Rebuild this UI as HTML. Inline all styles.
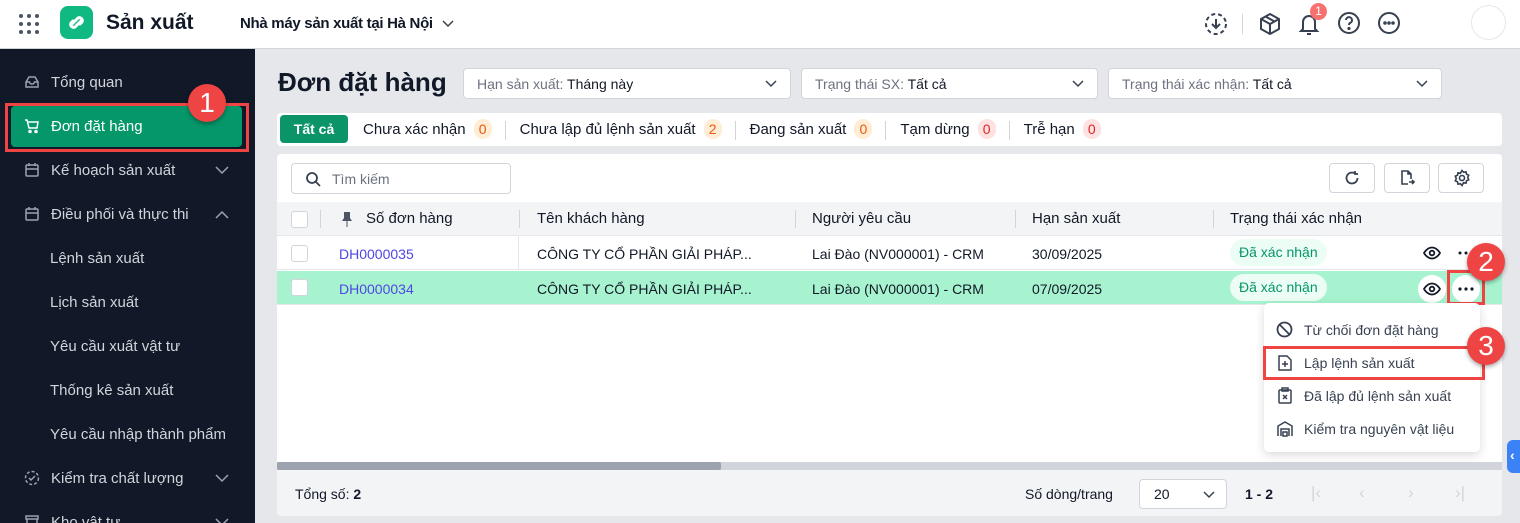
<!DOCTYPE html>
<html><head><meta charset="utf-8"><style>
*{box-sizing:border-box;margin:0;padding:0}
body{width:1520px;height:523px;overflow:hidden;font-family:"Liberation Sans",sans-serif;background:#e5e7eb;position:relative;color:#111827;font-size:14px}
.a{position:absolute}
.hdr{left:0;top:0;width:1520px;height:49px;background:#fff;border-bottom:1px solid #d1d5db}
.side{left:0;top:49px;width:255px;height:474px;background:#111827;color:#d1d5db;font-size:15px;overflow:hidden}
.side .it{position:absolute;left:50px}
.side svg{position:absolute}
.sel{background:#fff;border:1px solid #d1d5db;border-radius:4px;height:31px;font-size:14px;color:#6b7280;padding:7px 13px}
.sel b{font-weight:normal;color:#111827}
.chev{position:absolute;right:12px;top:8px}
.badge{display:inline-block;min-width:18px;height:20px;border-radius:9px;text-align:center;font-size:14px;line-height:20px;margin-left:8px}
.o{background:#ffedd5;color:#ea580c}.r{background:#fee2e2;color:#dc2626}
.sep{display:inline-block;width:1px;height:19px;background:#d1d5db;margin:0 14px 0 13px;vertical-align:middle}
.num{width:38px;height:38px;border-radius:50%;background:#ef4444;color:#fff;font-size:28px;text-align:center;line-height:38px;box-shadow:0 2px 4px rgba(0,0,0,.35)}
.cb{width:17px;height:17px;border:1px solid #d1d5db;border-radius:3px;background:#fff}
.th{font-size:15px;color:#111827}
.td{font-size:14px;color:#111827}
.pill{background:#ecfdf5;color:#059669;border-radius:14px;height:27px;padding:5px 9px;font-size:14px}
.btn{background:#fff;border:1px solid #d1d5db;border-radius:4px;width:46px;height:30px}
.mi{left:1278px;font-size:14px;color:#374151}
</style></head><body>
<div class="a hdr">
 <svg class="a" style="left:19px;top:14px" width="20" height="20" viewBox="0 0 20 20" fill="#4b5563"><circle cx="2" cy="2" r="2"/><circle cx="10" cy="2" r="2"/><circle cx="18" cy="2" r="2"/><circle cx="2" cy="10" r="2"/><circle cx="10" cy="10" r="2"/><circle cx="18" cy="10" r="2"/><circle cx="2" cy="18" r="2"/><circle cx="10" cy="18" r="2"/><circle cx="18" cy="18" r="2"/></svg>
 <div class="a" style="left:60px;top:6px;width:33px;height:33px;border-radius:8px;background:#10b981"><svg width="33" height="33" viewBox="0 0 33 33"><path d="M11 19l7-7a3 3 0 0 1 4 4l-2 2M22 14l-7 7a3 3 0 0 1-4-4l2-2" stroke="#fff" stroke-width="3" fill="none" stroke-linecap="round"/></svg></div>
 <div class="a" style="left:106px;top:11px;font-size:21px;font-weight:bold;color:#111827">Sản xuất</div>
 <div class="a" style="left:240px;top:15px;font-size:15px;font-weight:bold;color:#111827;letter-spacing:-0.3px">Nhà máy sản xuất tại Hà Nội</div>
 <svg class="a" style="left:442px;top:18px" width="12" height="10" viewBox="0 0 12 10"><path d="M1 3l5 5 5-5" stroke="#374151" stroke-width="1.5" fill="none"/></svg>
 <svg class="a" style="left:1204px;top:12px" width="24" height="24" viewBox="0 0 24 24" fill="none" stroke="#374151" stroke-width="2"><circle cx="12" cy="12" r="10" stroke-dasharray="4 3"/><path d="M12 7v9M8 12l4 4 4-4"/></svg>
 <div class="a" style="left:1242px;top:14px;width:1px;height:20px;background:#d1d5db"></div>
 <svg class="a" style="left:1258px;top:12px" width="24" height="24" viewBox="0 0 24 24" fill="none" stroke="#374151" stroke-width="2" stroke-linejoin="round"><path d="M12 2l9 5v10l-9 5-9-5V7zM3 7l9 5 9-5M12 12v10M7.5 4.5l9 5"/></svg>
 <svg class="a" style="left:1297px;top:11px" width="24" height="26" viewBox="0 0 24 26" fill="none" stroke="#374151" stroke-width="2"><path d="M6 18V11a6 6 0 0 1 12 0v7l2 2H4zM10 23h4"/></svg>
 <div class="a" style="left:1310px;top:3px;width:17px;height:17px;border-radius:50%;background:#f87171;color:#fff;font-size:12px;text-align:center;line-height:17px">1</div>
 <svg class="a" style="left:1337px;top:11px" width="24" height="24" viewBox="0 0 24 24" fill="none" stroke="#374151" stroke-width="2"><circle cx="12" cy="12" r="10"/><path d="M9 9a3 3 0 1 1 4 3c-1 .5-1 1-1 2"/><circle cx="12" cy="17.5" r=".6" fill="#374151"/></svg>
 <svg class="a" style="left:1377px;top:11px" width="24" height="24" viewBox="0 0 24 24" fill="none" stroke="#374151" stroke-width="2"><circle cx="12" cy="12" r="10"/><circle cx="8" cy="12" r=".8" fill="#374151"/><circle cx="12" cy="12" r=".8" fill="#374151"/><circle cx="16" cy="12" r=".8" fill="#374151"/></svg>
 <div class="a" style="left:1471px;top:5px;width:35px;height:35px;border-radius:50%;border:1px solid #e5e7eb"></div>
</div>

<div class="a side">
 <svg style="left:24px;top:25px" width="16" height="16" viewBox="0 0 16 16" fill="none" stroke="#9ca3af" stroke-width="1.5"><path d="M2 8l3-5h6l3 5v5H2zM2 8h3.5a2.5 2 0 0 0 5 0H14"/></svg>
 <div class="it" style="top:25px;left:51px">Tổng quan</div>
 <div class="a" style="left:11px;top:57px;width:231px;height:41px;background:#059669;border-radius:4px"></div>
 <svg style="left:24px;top:69px" width="16" height="16" viewBox="0 0 16 16" fill="none" stroke="#fff" stroke-width="1.5"><path d="M1 2h2l2 8h8l1-6H4"/><circle cx="6" cy="13.5" r="1"/><circle cx="12" cy="13.5" r="1"/></svg>
 <div class="it" style="top:69px;left:51px;color:#fff">Đơn đặt hàng</div>
 <div class="a" style="left:5px;top:54px;width:244px;height:49px;border:3px solid #ef4444"></div>
 <svg style="left:24px;top:113px" width="16" height="16" viewBox="0 0 16 16" fill="none" stroke="#9ca3af" stroke-width="1.5"><rect x="2" y="3" width="12" height="11" rx="1"/><path d="M2 7h12M5 1v3M11 1v3"/></svg>
 <div class="it" style="top:113px;left:51px">Kế hoạch sản xuất</div>
 <svg style="left:215px;top:117px" width="14" height="9" viewBox="0 0 14 9"><path d="M1 1l6 6 6-6" stroke="#9ca3af" stroke-width="1.5" fill="none"/></svg>
 <svg style="left:24px;top:157px" width="16" height="16" viewBox="0 0 16 16" fill="none" stroke="#9ca3af" stroke-width="1.5"><rect x="2" y="3" width="12" height="11" rx="1"/><path d="M2 7h12M5 1v3M11 1v3"/></svg>
 <div class="it" style="top:157px;left:51px">Điều phối và thực thi</div>
 <svg style="left:215px;top:161px" width="14" height="9" viewBox="0 0 14 9"><path d="M1 8l6-6 6 6" stroke="#9ca3af" stroke-width="1.5" fill="none"/></svg>
 <div class="it" style="top:201px">Lệnh sản xuất</div>
 <div class="it" style="top:245px">Lịch sản xuất</div>
 <div class="it" style="top:289px">Yêu cầu xuất vật tư</div>
 <div class="it" style="top:333px">Thống kê sản xuất</div>
 <div class="it" style="top:377px">Yêu cầu nhập thành phẩm</div>
 <svg style="left:24px;top:421px" width="16" height="16" viewBox="0 0 16 16" fill="none" stroke="#9ca3af" stroke-width="1.5"><circle cx="8" cy="8" r="6.5" stroke-dasharray="3 2"/><path d="M5 8l2 2 4-4"/></svg>
 <div class="it" style="top:421px;left:51px">Kiểm tra chất lượng</div>
 <svg style="left:215px;top:425px" width="14" height="9" viewBox="0 0 14 9"><path d="M1 1l6 6 6-6" stroke="#9ca3af" stroke-width="1.5" fill="none"/></svg>
 <div class="it" style="top:465px;left:51px">Kho vật tư</div>
 <svg style="left:24px;top:465px" width="16" height="16" viewBox="0 0 16 16" fill="none" stroke="#9ca3af" stroke-width="1.5"><path d="M2 2h12v3H2zM3 5v9h10V5"/></svg>
 <svg style="left:215px;top:469px" width="14" height="9" viewBox="0 0 14 9"><path d="M1 1l6 6 6-6" stroke="#9ca3af" stroke-width="1.5" fill="none"/></svg>
</div>
<div class="a num" style="left:188px;top:84px">1</div>

<div class="a" style="left:278px;top:67px;font-size:26px;font-weight:bold;color:#111827">Đơn đặt hàng</div>
<div class="a sel" style="left:463px;top:68px;width:328px">Hạn sản xuất: <b>Tháng này</b><svg class="chev" width="14" height="14" viewBox="0 0 14 14"><path d="M2 4l5 5 5-5" stroke="#374151" stroke-width="1.5" fill="none"/></svg></div>
<div class="a sel" style="left:801px;top:68px;width:297px">Trạng thái SX: <b>Tất cả</b><svg class="chev" width="14" height="14" viewBox="0 0 14 14"><path d="M2 4l5 5 5-5" stroke="#374151" stroke-width="1.5" fill="none"/></svg></div>
<div class="a sel" style="left:1108px;top:68px;width:334px">Trạng thái xác nhận: <b>Tất cả</b><svg class="chev" width="14" height="14" viewBox="0 0 14 14"><path d="M2 4l5 5 5-5" stroke="#374151" stroke-width="1.5" fill="none"/></svg></div>

<div class="a" style="left:277px;top:113px;width:1225px;height:33px;background:#fff;border-radius:4px"></div>
<div class="a" style="left:280px;top:115px;width:68px;height:28px;background:#0a9467;border-radius:4px;color:#fff;font-weight:bold;font-size:14px;text-align:center;line-height:28px">Tất cả</div>
<div class="a" style="left:363px;top:119px;font-size:15px;color:#111827;white-space:nowrap">Chưa xác nhận<span class="badge o">0</span><span class="sep"></span>Chưa lập đủ lệnh sản xuất<span class="badge o">2</span><span class="sep"></span>Đang sản xuất<span class="badge o">0</span><span class="sep"></span>Tạm dừng<span class="badge r">0</span><span class="sep"></span>Trễ hạn<span class="badge r">0</span></div>

<div class="a" style="left:277px;top:154px;width:1225px;height:362px;background:#fff;border-radius:4px;overflow:hidden">
 <div class="a" style="left:14px;top:9px;width:220px;height:31px;border:1px solid #d1d5db;border-radius:4px"></div>
 <svg class="a" style="left:28px;top:17px" width="16" height="16" viewBox="0 0 16 16" fill="none" stroke="#374151" stroke-width="1.8"><circle cx="7" cy="7" r="5"/><path d="M11 11l4 4"/></svg>
 <div class="a" style="left:55px;top:17px;color:#6b7280;font-size:14px">Tìm kiếm</div>
 <div class="a btn" style="left:1052px;top:9px"><svg style="margin:6px 14px" width="16" height="16" viewBox="0 0 16 16" fill="none" stroke="#374151" stroke-width="1.8"><path d="M13.5 8A5.5 5.5 0 1 1 11 3.4M11 1v3h3"/></svg></div>
 <div class="a btn" style="left:1107px;top:9px"><svg style="margin:6px 14px" width="16" height="16" viewBox="0 0 16 16" fill="none" stroke="#374151" stroke-width="1.6"><path d="M9 14H3V1h6l3 3v5M9 1v3h3M10 12h5M13 10l2 2-2 2"/></svg></div>
 <div class="a btn" style="left:1161px;top:9px"><svg style="margin:5px 14px" width="18" height="18" viewBox="0 0 18 18" fill="none" stroke="#374151" stroke-width="1.6"><circle cx="9" cy="9" r="2.5"/><path d="M9 1.5l1.6 1.8 2.4-.5.5 2.4 2.2 1-1 2.3 1 2.3-2.2 1-.5 2.4-2.4-.5L9 16.5l-1.6-1.8-2.4.5-.5-2.4-2.2-1 1-2.3-1-2.3 2.2-1 .5-2.4 2.4.5z"/></svg></div>
 <div class="a" style="left:0;top:48px;width:1225px;height:34px;background:#f3f4f6;border-bottom:1px solid #e5e7eb"></div>
 <div class="a cb" style="left:14px;top:57px"></div>
 <div class="a" style="left:43px;top:56px;width:1px;height:18px;background:#d1d5db"></div>
 <svg class="a" style="left:64px;top:57px" width="12" height="16" viewBox="0 0 12 16" fill="#4b5563"><path d="M3 1h6v6l2 3H1l2-3zM5.5 10h1v6h-1z"/></svg>
 <div class="a th" style="left:89px;top:56px">Số đơn hàng</div>
 <div class="a" style="left:242px;top:56px;width:1px;height:18px;background:#d1d5db"></div>
 <div class="a th" style="left:260px;top:56px">Tên khách hàng</div>
 <div class="a" style="left:518px;top:56px;width:1px;height:18px;background:#d1d5db"></div>
 <div class="a th" style="left:535px;top:56px">Người yêu cầu</div>
 <div class="a" style="left:738px;top:56px;width:1px;height:18px;background:#d1d5db"></div>
 <div class="a th" style="left:755px;top:56px">Hạn sản xuất</div>
 <div class="a" style="left:936px;top:56px;width:1px;height:18px;background:#d1d5db"></div>
 <div class="a th" style="left:953px;top:56px">Trạng thái xác nhận</div>
 <div class="a" style="left:0;top:82px;width:1225px;height:34px;border-bottom:1px solid #e5e7eb"></div>
 <div class="a" style="left:241px;top:82px;width:1px;height:34px;background:#e5e7eb"></div>
 <div class="a cb" style="left:14px;top:91px"></div>
 <div class="a td" style="left:62px;top:92px;color:#4f46e5">DH0000035</div>
 <div class="a td" style="left:260px;top:92px">CÔNG TY CỔ PHẦN GIẢI PHÁP...</div>
 <div class="a td" style="left:535px;top:92px">Lai Đào (NV000001) - CRM</div>
 <div class="a td" style="left:755px;top:92px">30/09/2025</div>
 <div class="a pill" style="left:953px;top:85px">Đã xác nhận</div>
 <svg class="a" style="left:1146px;top:92px" width="18" height="14" viewBox="0 0 18 14" fill="none" stroke="#111827" stroke-width="1.8"><path d="M1 7s3-5.5 8-5.5S17 7 17 7s-3 5.5-8 5.5S1 7 1 7z"/><circle cx="9" cy="7" r="2.3"/></svg>
 <svg class="a" style="left:1181px;top:97px" width="16" height="4" viewBox="0 0 16 4" fill="#111827"><circle cx="2" cy="2" r="1.5"/><circle cx="8" cy="2" r="1.5"/><circle cx="14" cy="2" r="1.5"/></svg>
 <div class="a" style="left:0;top:117px;width:1225px;height:34px;background:#a7f3d0;border-bottom:1px solid #e5e7eb"></div>
 <div class="a cb" style="left:14px;top:125px"></div>
 <div class="a td" style="left:62px;top:127px;color:#4f46e5">DH0000034</div>
 <div class="a td" style="left:260px;top:127px">CÔNG TY CỔ PHẦN GIẢI PHÁP...</div>
 <div class="a td" style="left:535px;top:127px">Lai Đào (NV000001) - CRM</div>
 <div class="a td" style="left:755px;top:127px">07/09/2025</div>
 <div class="a pill" style="left:953px;top:120px">Đã xác nhận</div>
 <div class="a" style="left:1141px;top:121px;width:28px;height:28px;border-radius:50%;background:#fff"></div>
 <svg class="a" style="left:1146px;top:128px" width="18" height="14" viewBox="0 0 18 14" fill="none" stroke="#111827" stroke-width="1.8"><path d="M1 7s3-5.5 8-5.5S17 7 17 7s-3 5.5-8 5.5S1 7 1 7z"/><circle cx="9" cy="7" r="2.3"/></svg>
 <div class="a" style="left:1175px;top:121px;width:28px;height:28px;border-radius:50%;background:#fff"></div>
 <svg class="a" style="left:1181px;top:133px" width="16" height="4" viewBox="0 0 16 4" fill="#111827"><circle cx="2" cy="2" r="1.6"/><circle cx="8" cy="2" r="1.6"/><circle cx="14" cy="2" r="1.6"/></svg>
 <div class="a" style="left:0;top:308px;width:1225px;height:8px;background:#d1d5db"></div>
 <div class="a" style="left:0;top:308px;width:444px;height:8px;background:#9ca3af;border-radius:2px"></div>
 <div class="a" style="left:0;top:316px;width:1225px;height:46px;background:#f3f4f6"></div>
 <div class="a" style="left:18px;top:332px;font-size:14px">Tổng số: <b>2</b></div>
 <div class="a" style="left:748px;top:332px;font-size:14px">Số dòng/trang</div>
 <div class="a" style="left:862px;top:325px;width:88px;height:30px;border:1px solid #d1d5db;border-radius:4px;background:#fff;padding:6px 14px;font-size:14px">20<svg style="position:absolute;right:10px;top:9px" width="14" height="12" viewBox="0 0 14 12"><path d="M2 3l5 5 5-5" stroke="#374151" stroke-width="1.5" fill="none"/></svg></div>
 <div class="a" style="left:968px;top:332px;font-size:14px;font-weight:bold">1 - 2</div>
 <div class="a" style="left:1034px;top:329px;color:#d1d5db;font-size:17px">|‹</div>
 <div class="a" style="left:1082px;top:329px;color:#d1d5db;font-size:17px">‹</div>
 <div class="a" style="left:1131px;top:329px;color:#d1d5db;font-size:17px">›</div>
 <div class="a" style="left:1178px;top:329px;color:#d1d5db;font-size:17px">›|</div>
</div>
<div class="a" style="left:1447px;top:270px;width:38px;height:35px;border:3px solid #ef4444"></div>
<div class="a num" style="left:1467px;top:243px">2</div>

<div class="a" style="left:1264px;top:303px;width:216px;height:149px;background:#fff;border-radius:5px;box-shadow:0 3px 10px rgba(0,0,0,.15)"></div>
<svg class="a" style="left:1276px;top:321px" width="17" height="17" viewBox="0 0 17 17" fill="none" stroke="#374151" stroke-width="1.8"><circle cx="8.5" cy="8.5" r="7"/><path d="M3.5 3.5l10 10"/></svg>
<div class="a mi" style="left:1304px;top:322px">Từ chối đơn đặt hàng</div>
<svg class="a" style="left:1278px;top:355px" width="14" height="16" viewBox="0 0 14 16" fill="none" stroke="#374151" stroke-width="1.5"><path d="M1 1h8l4 4v10H1zM7 6v6M4 9h6"/></svg>
<div class="a mi" style="left:1304px;top:355px">Lập lệnh sản xuất</div>
<svg class="a" style="left:1278px;top:387px" width="14" height="17" viewBox="0 0 14 17" fill="none" stroke="#374151" stroke-width="1.5"><rect x="1" y="3" width="12" height="13" rx="1"/><rect x="4" y="1" width="6" height="3"/><path d="M5 8l4 4M9 8l-4 4"/></svg>
<div class="a mi" style="left:1304px;top:388px">Đã lập đủ lệnh sản xuất</div>
<svg class="a" style="left:1277px;top:421px" width="16" height="16" viewBox="0 0 16 16" fill="none" stroke="#374151" stroke-width="1.5"><path d="M1 15V5l7-4 7 4v10M4 15V8h8v7M6 11h4v4H6z"/></svg>
<div class="a mi" style="left:1304px;top:421px">Kiểm tra nguyên vật liệu</div>
<div class="a" style="left:1263px;top:346px;width:222px;height:34px;border:3px solid #ef4444"></div>
<div class="a num" style="left:1467px;top:327px">3</div>

<div class="a" style="left:1507px;top:440px;width:14px;height:33px;background:#3b82f6;border-radius:6px 0 0 6px;color:#fff;font-size:14px;padding:7px 3px;font-weight:bold">‹</div>
</body></html>
